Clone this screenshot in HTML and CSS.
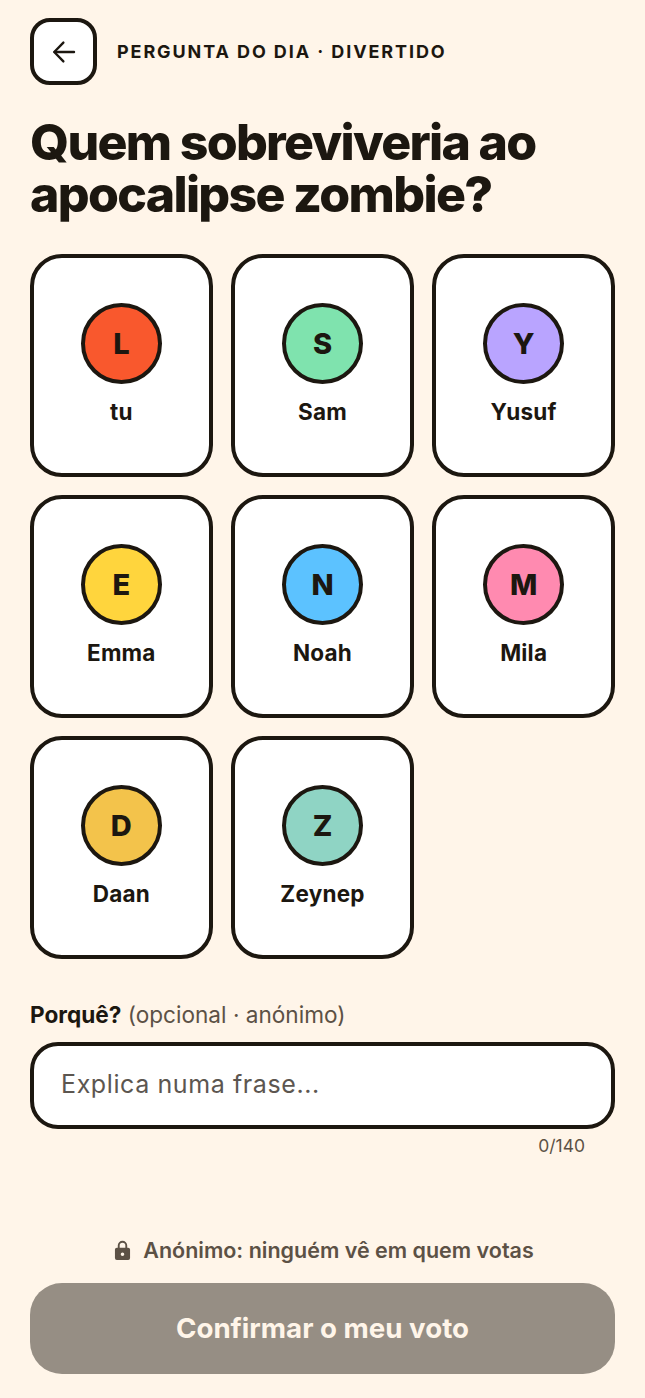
FILE: index.html
```html
<!DOCTYPE html>
<html lang="pt">
<head>
    <meta charset="UTF-8">
    <meta name="viewport" content="width=device-width, initial-scale=1.0">
    <title>Pergunta do dia</title>
    <link rel="stylesheet" href="styles.css">
</head>
<body>
    <div class="screen">
        <!-- Header -->
        <div class="top-bar">
            <button class="back-btn" aria-label="Voltar">
                <svg width="30" height="30" viewBox="0 0 24 24" fill="none" stroke="#1c1710" stroke-width="1.9" stroke-linecap="round" stroke-linejoin="round">
                    <path d="M20 12H4.5"/>
                    <path d="M11.5 4.5 4.2 12l7.3 7.5"/>
                </svg>
            </button>
            <span class="eyebrow">PERGUNTA DO DIA · DIVERTIDO</span>
        </div>

        <h1 class="question">Quem sobreviveria ao apocalipse zombie?</h1>

        <!-- Vote options -->
        <div class="people">
            <button class="person"><span class="avatar av-orange">L</span><span class="person-name">tu</span></button>
            <button class="person"><span class="avatar av-green">S</span><span class="person-name">Sam</span></button>
            <button class="person"><span class="avatar av-purple">Y</span><span class="person-name">Yusuf</span></button>
            <button class="person"><span class="avatar av-yellow">E</span><span class="person-name">Emma</span></button>
            <button class="person"><span class="avatar av-blue">N</span><span class="person-name">Noah</span></button>
            <button class="person"><span class="avatar av-pink">M</span><span class="person-name">Mila</span></button>
            <button class="person"><span class="avatar av-gold">D</span><span class="person-name">Daan</span></button>
            <button class="person"><span class="avatar av-teal">Z</span><span class="person-name">Zeynep</span></button>
        </div>

        <!-- Reason -->
        <div class="reason">
            <label class="reason-label" for="reason"><b>Porquê?</b> (opcional · anónimo)</label>
            <input class="reason-input" type="text" id="reason" placeholder="Explica numa frase...">
            <div class="counter">0/140</div>
        </div>

        <!-- Footer -->
        <div class="footer">
            <div class="privacy">
                <svg width="17" height="21" viewBox="0 0 18 22" fill="#5c5145">
                    <path fill-rule="evenodd" d="M4 8V5.8a5 5 0 0 1 10 0V8h1a2 2 0 0 1 2 2v9a2 2 0 0 1-2 2H3a2 2 0 0 1-2-2v-9a2 2 0 0 1 2-2h1Zm2 0h6V5.8a3 3 0 0 0-6 0V8Zm3 5a1.9 1.9 0 1 0 0 3.8A1.9 1.9 0 0 0 9 13Z"/>
                </svg>
                <span>Anónimo: ninguém vê em quem votas</span>
            </div>
            <button class="confirm" disabled>Confirmar o meu voto</button>
        </div>
    </div>
</body>
</html>
```

FILE: styles.css
```css
* {
    box-sizing: border-box;
    font-family: 'Inter', 'Liberation Sans', sans-serif;
}
html, body {
    margin: 0;
    padding: 0;
}
body {
    background-color: #fff5e9;
    color: #1c1710;
}
.screen {
    height: 1398px;
    padding: 18px 30px 24px;
    display: flex;
    flex-direction: column;
    overflow: hidden;
}
.top-bar {
    display: flex;
    align-items: center;
    gap: 20px;
}
.back-btn {
    width: 67px;
    height: 67px;
    padding: 0;
    background: white;
    border: 4px solid #1c1710;
    border-radius: 20px;
    display: flex;
    align-items: center;
    justify-content: center;
}
.eyebrow {
    font-size: 18px;
    font-weight: 700;
    letter-spacing: 1.9px;
}
.question {
    margin: 31px 0 0;
    font-size: 50px;
    line-height: 52px;
    font-weight: 800;
    letter-spacing: -1.7px;
}
.people {
    margin-top: 34px;
    display: grid;
    grid-template-columns: repeat(3, 1fr);
    grid-auto-rows: 223px;
    gap: 18px 18.5px;
}
.person {
    padding: 0 0 3px;
    background: white;
    border: 4px solid #1c1710;
    border-radius: 32px;
    display: flex;
    flex-direction: column;
    align-items: center;
    justify-content: center;
    gap: 15px;
    color: #1c1710;
}
.avatar {
    width: 81px;
    height: 81px;
    border: 4px solid #1c1710;
    border-radius: 50%;
    display: flex;
    align-items: center;
    justify-content: center;
    font-size: 29px;
    font-weight: 800;
}
.person-name {
    font-size: 22.5px;
    line-height: 26px;
    font-weight: 700;
    letter-spacing: 0.2px;
}
.av-orange { background: #f9582d; }
.av-green { background: #7fe3ae; }
.av-purple { background: #b9a4ff; }
.av-yellow { background: #ffd53d; }
.av-blue { background: #5cc2ff; }
.av-pink { background: #ff8ab0; }
.av-gold { background: #f3c34b; }
.av-teal { background: #8fd4c4; }
.reason {
    margin-top: 42px;
}
.reason-label {
    display: block;
    font-size: 22.6px;
    line-height: 28px;
    color: #5c5145;
}
.reason-label b {
    font-weight: 700;
    color: #1c1710;
}
.reason-input {
    display: block;
    width: 100%;
    height: 87px;
    margin-top: 13px;
    padding: 0 27px 3px;
    background: white;
    border: 4px solid #1c1710;
    border-radius: 28px;
    font-size: 25px;
    letter-spacing: 0.6px;
    color: #1c1710;
    outline: none;
}
.reason-input::placeholder {
    color: #5c5650;
    opacity: 1;
}
.counter {
    margin-top: 6px;
    padding-right: 30px;
    text-align: right;
    font-size: 17.5px;
    line-height: 22px;
    color: #5c5145;
}
.footer {
    margin-top: auto;
}
.privacy {
    display: flex;
    align-items: center;
    justify-content: center;
    gap: 12px;
    padding-left: 3px;
    font-size: 21.5px;
    font-weight: 600;
    color: #5c5145;
}
.confirm {
    display: block;
    width: 100%;
    height: 91px;
    margin-top: 20px;
    padding-bottom: 2px;
    background: #968e84;
    border: none;
    border-radius: 32px;
    color: #fff5e9;
    font-size: 27.7px;
    font-weight: 700;
}
```
